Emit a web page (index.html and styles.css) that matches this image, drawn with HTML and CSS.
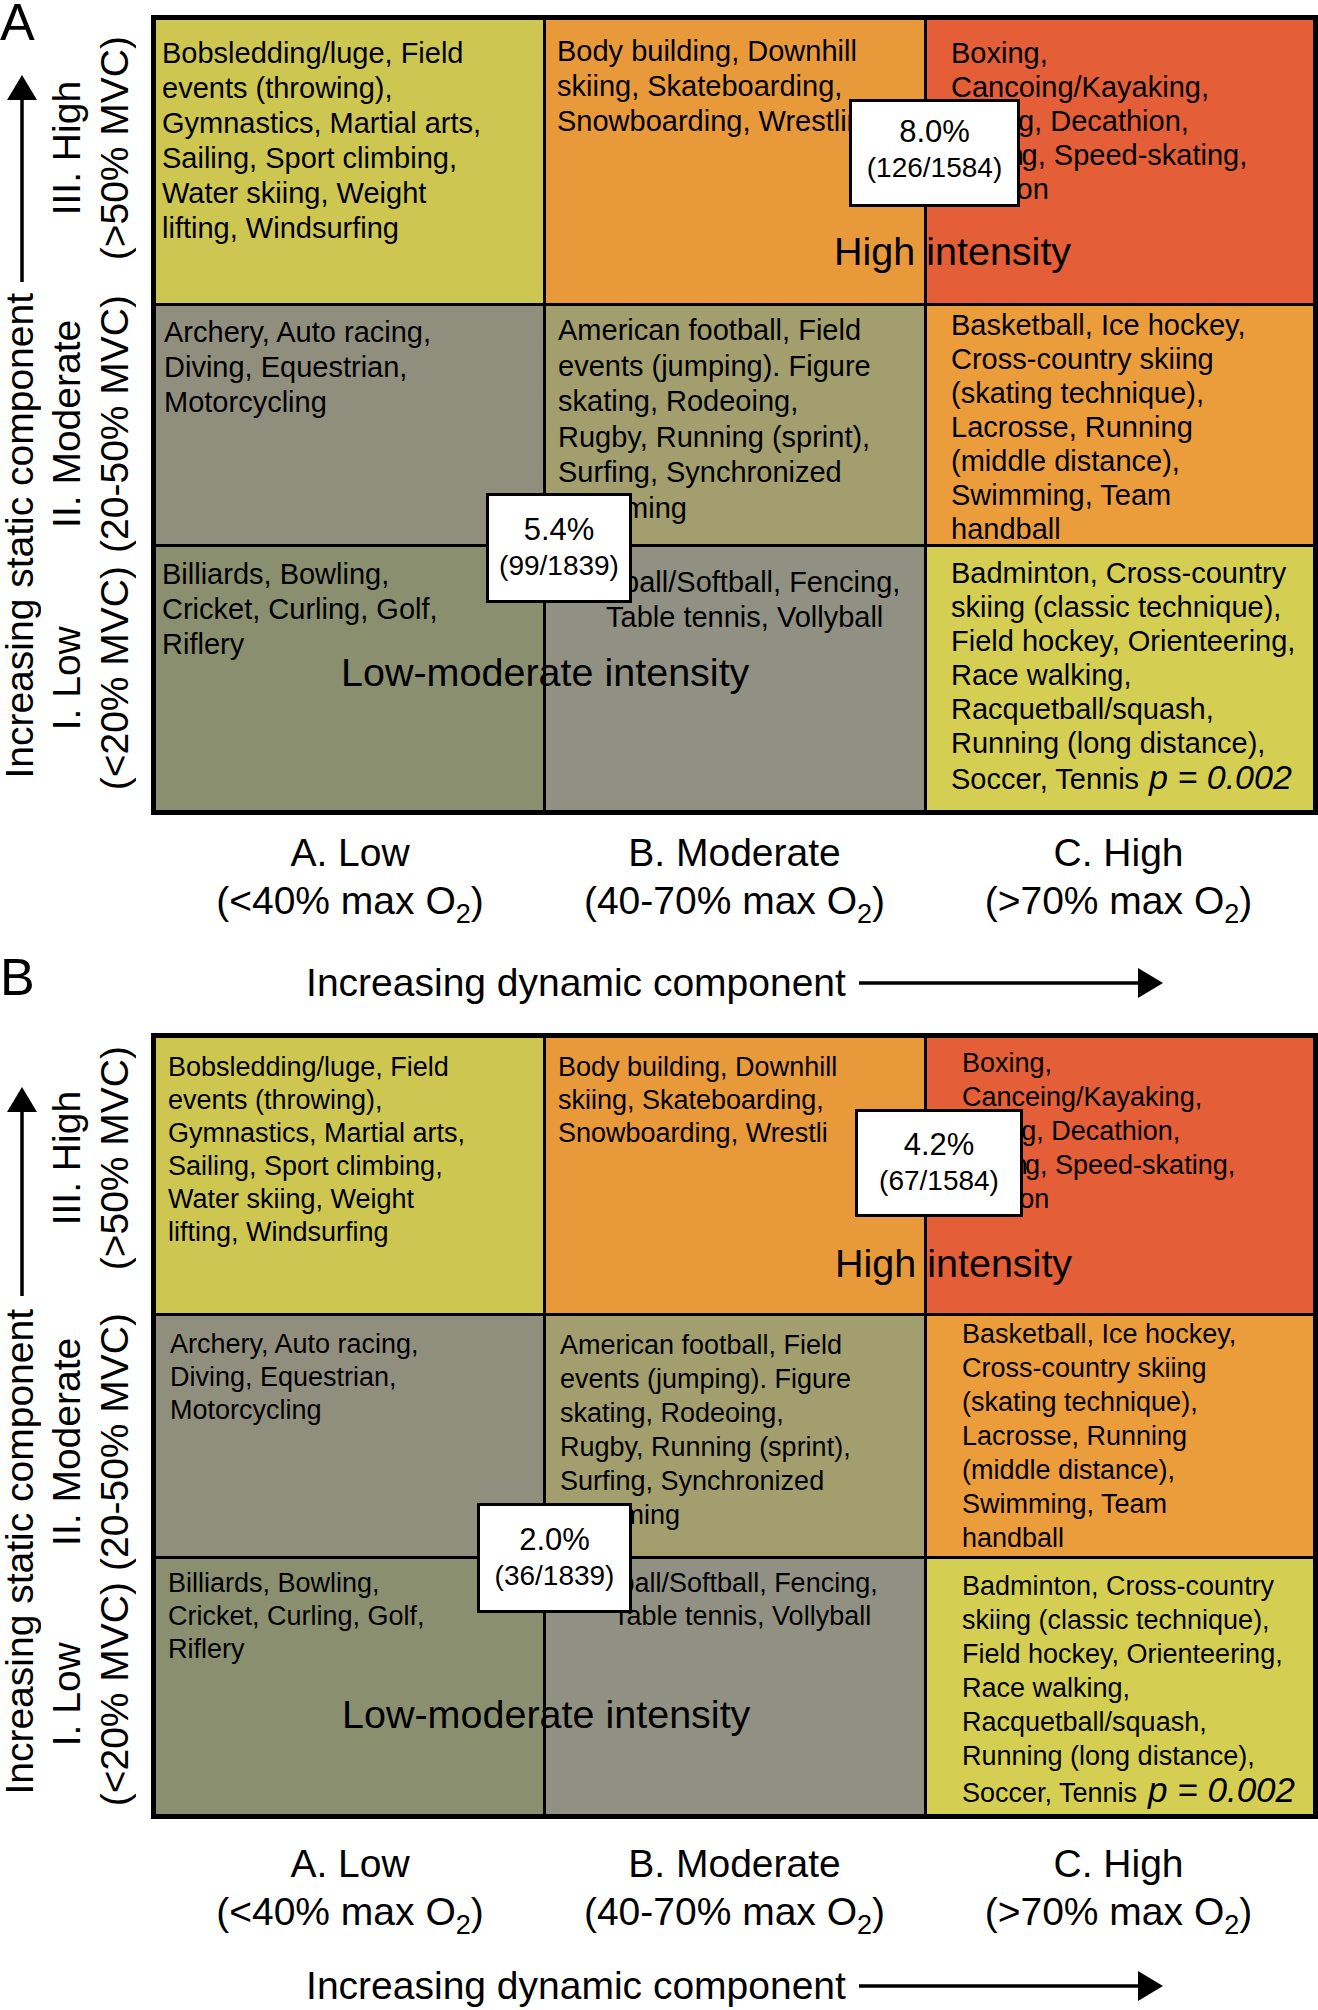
FILE: index.html
```html
<!DOCTYPE html>
<html lang="en">
<head>
<meta charset="utf-8">
<title>Classification of sports by static and dynamic component</title>
<link rel="stylesheet" href="styles.css">
</head>
<body>
<div class="figure">

  <section class="panel panel-a">
    <div class="panel-letter">A</div>
    <div class="chart">
      <div class="yaxis">
        <div class="static-axis">
          <svg class="up-arrow" width="30" height="207" viewBox="0 0 30 207"><polygon points="15,0 30,25 0,25" fill="#000"/><rect x="13.25" y="24" width="3.5" height="183" fill="#000"/></svg>
          <div class="vtext static-title">Increasing static component</div>
        </div>
        <div class="row-labels">
          <div class="row-label rl1"><div class="vtext">III. High<br>(&gt;50% MVC)</div></div>
          <div class="row-label rl2"><div class="vtext">II. Moderate<br>(20-50% MVC)</div></div>
          <div class="row-label rl3"><div class="vtext">I. Low<br>(&lt;20% MVC)</div></div>
        </div>
      </div>
      <div class="grid">
        <div class="cell c-yl p11">Bobsledding/luge, Field<br>events (throwing),<br>Gymnastics, Martial arts,<br>Sailing, Sport climbing,<br>Water skiing, Weight<br>lifting, Windsurfing</div>
        <div class="cell c-or p12">Body building, Downhill<br>skiing, Skateboarding,<br>Snowboarding, Wrestling</div>
        <div class="cell c-rd right p13">Boxing,<br>Cancoing/Kayaking,<br><span class="tuck">Cyclin</span>g, Decathion,<br><span class="tuck">Rowin</span>g, Speed-skating,<br><span class="tuck">Triathl</span>on</div>
        <div class="cell c-gy p21">Archery, Auto racing,<br>Diving, Equestrian,<br>Motorcycling</div>
        <div class="cell c-ol p22">American football, Field<br>events (jumping). Figure<br>skating, Rodeoing,<br>Rugby, Running (sprint),<br>Surfing, Synchronized<br>swimming</div>
        <div class="cell c-or2 right p23">Basketball, Ice hockey,<br>Cross-country skiing<br>(skating technique),<br>Lacrosse, Running<br>(middle distance),<br>Swimming, Team<br>handball</div>
        <div class="cell c-gg p31">Billiards, Bowling,<br>Cricket, Curling, Golf,<br>Riflery</div>
        <div class="cell c-gy2 p32">Baseball/Softball, Fencing,<br><span class="indent">Table tennis, Vollyball</span></div>
        <div class="cell c-yl2 right p33">Badminton, Cross-country<br>skiing (classic technique),<br>Field hockey, Orienteering,<br>Race walking,<br>Racquetball/squash,<br>Running (long distance),<br>Soccer, Tennis<i class="pval">p = 0.002</i></div>

        <div class="tag tag-high">High intensity</div>
        <div class="tag tag-low">Low-moderate intensity</div>
        <div class="stat stat-high"><span class="pct">8.0%</span><span class="frac">(126/1584)</span></div>
        <div class="stat stat-low"><span class="pct">5.4%</span><span class="frac">(99/1839)</span></div>
      </div>
    </div>
    <div class="xlabels">
      <div>A. Low<br>(&lt;40% max O<sub>2</sub>)</div>
      <div>B. Moderate<br>(40-70% max O<sub>2</sub>)</div>
      <div>C. High<br>(&gt;70% max O<sub>2</sub>)</div>
    </div>
    <div class="xtitle">
      <span>Increasing dynamic component</span>
      <svg class="right-arrow" width="304" height="30" viewBox="0 0 304 30"><rect x="0" y="13.25" width="282" height="3.5" fill="#000"/><polygon points="279,0 304,15 279,30" fill="#000"/></svg>
    </div>
  </section>

  <section class="panel panel-b">
    <div class="panel-letter">B</div>
    <div class="chart">
      <div class="yaxis">
        <div class="static-axis">
          <svg class="up-arrow" width="30" height="209" viewBox="0 0 30 209"><polygon points="15,0 30,25 0,25" fill="#000"/><rect x="13.25" y="24" width="3.5" height="185" fill="#000"/></svg>
          <div class="vtext static-title">Increasing static component</div>
        </div>
        <div class="row-labels">
          <div class="row-label rl1"><div class="vtext">III. High<br>(&gt;50% MVC)</div></div>
          <div class="row-label rl2"><div class="vtext">II. Moderate<br>(20-50% MVC)</div></div>
          <div class="row-label rl3"><div class="vtext">I. Low<br>(&lt;20% MVC)</div></div>
        </div>
      </div>
      <div class="grid">
        <div class="cell c-yl p11">Bobsledding/luge, Field<br>events (throwing),<br>Gymnastics, Martial arts,<br>Sailing, Sport climbing,<br>Water skiing, Weight<br>lifting, Windsurfing</div>
        <div class="cell c-or p12">Body building, Downhill<br>skiing, Skateboarding,<br>Snowboarding, Wrestli</div>
        <div class="cell c-rd right p13">Boxing,<br>Canceing/Kayaking,<br><span class="tuck">Cyclin</span>g, Decathion,<br><span class="tuck">Rowin</span>g, Speed-skating,<br><span class="tuck">Triathl</span>on</div>
        <div class="cell c-gy p21">Archery, Auto racing,<br>Diving, Equestrian,<br>Motorcycling</div>
        <div class="cell c-ol p22">American football, Field<br>events (jumping). Figure<br>skating, Rodeoing,<br>Rugby, Running (sprint),<br>Surfing, Synchronized<br>swimming</div>
        <div class="cell c-or2 right p23">Basketball, Ice hockey,<br>Cross-country skiing<br>(skating technique),<br>Lacrosse, Running<br>(middle distance),<br>Swimming, Team<br>handball</div>
        <div class="cell c-gg p31">Billiards, Bowling,<br>Cricket, Curling, Golf,<br>Riflery</div>
        <div class="cell c-gy2 p32">Baseball/Softball, Fencing,<br><span class="indent">Table tennis, Vollyball</span></div>
        <div class="cell c-yl2 right p33">Badminton, Cross-country<br>skiing (classic technique),<br>Field hockey, Orienteering,<br>Race walking,<br>Racquetball/squash,<br>Running (long distance),<br>Soccer, Tennis<i class="pval">p = 0.002</i></div>

        <div class="tag tag-high">High intensity</div>
        <div class="tag tag-low">Low-moderate intensity</div>
        <div class="stat stat-high"><span class="pct">4.2%</span><span class="frac">(67/1584)</span></div>
        <div class="stat stat-low"><span class="pct">2.0%</span><span class="frac">(36/1839)</span></div>
      </div>
    </div>
    <div class="xlabels">
      <div>A. Low<br>(&lt;40% max O<sub>2</sub>)</div>
      <div>B. Moderate<br>(40-70% max O<sub>2</sub>)</div>
      <div>C. High<br>(&gt;70% max O<sub>2</sub>)</div>
    </div>
    <div class="xtitle">
      <span>Increasing dynamic component</span>
      <svg class="right-arrow" width="304" height="30" viewBox="0 0 304 30"><rect x="0" y="13.25" width="282" height="3.5" fill="#000"/><polygon points="279,0 304,15 279,30" fill="#000"/></svg>
    </div>
  </section>

</div>
</body>
</html>
```

FILE: styles.css
```css
html, body {
  margin: 0;
  padding: 0;
  background: #ffffff;
}

body {
  color: #000000;
  font-family: "Liberation Sans", Arial, Helvetica, sans-serif;
  overflow: hidden;
}

.figure {
  width: 1318px;
}

.panel {
  position: relative;
}

.panel-a {
  padding-top: 15px;
}

.panel-b {
  margin-top: 26.5px;
}

/* panel letters A / B */
.panel-letter {
  position: absolute;
  left: 0;
  font-size: 52px;
  line-height: 52px;
}

.panel-a .panel-letter {
  top: -4px;
}

.panel-b .panel-letter {
  top: -82px;
}

/* chart = y axis + grid */
.chart {
  display: flex;
}

.yaxis {
  width: 151px;
  flex-shrink: 0;
  display: flex;
}

.static-axis {
  width: 43px;
  display: flex;
  flex-direction: column;
  justify-content: flex-end;
  align-items: center;
}

.panel-a .static-axis {
  gap: 11px;
  padding-bottom: 36px;
}

.panel-b .static-axis {
  gap: 13px;
  padding-bottom: 24px;
}

.up-arrow {
  display: block;
  flex-shrink: 0;
  margin-left: 1px;
}

.vtext {
  writing-mode: vertical-rl;
  transform: rotate(180deg);
  white-space: nowrap;
  font-size: 39px;
}

.static-title {
  line-height: 39px;
  margin-right: 4px;
}

.row-labels {
  width: 96px;
  display: flex;
  flex-direction: column;
}

.row-label {
  display: flex;
  align-items: center;
  justify-content: center;
  flex-shrink: 0;
}

.row-label .vtext {
  line-height: 48px;
  text-align: center;
}

.panel-a .rl1 { height: 266px; }
.panel-a .rl2 { height: 286px; }
.panel-a .rl3 { height: 222px; }

.panel-b .rl1 { height: 250px; }
.panel-b .rl2 { height: 318px; }
.panel-b .rl3 { height: 186px; }

/* the 3 x 3 grid */
.grid {
  position: relative;
  display: grid;
  grid-template-columns: 387px 378px 386px;
  gap: 3px;
  border: 5px solid #000000;
  background: #000000;
}

.panel-a .grid {
  grid-template-rows: 283px 238px 263px;
}

.panel-b .grid {
  grid-template-rows: 275px 240px 255px;
}

.cell {
  white-space: nowrap;
  overflow: visible;
}

.panel-a .cell {
  font-size: 29px;
  line-height: 35px;
}

.panel-a .cell.right {
  line-height: 34px;
}

.panel-b .cell {
  font-size: 27px;
  line-height: 33px;
}

.panel-b .cell.right {
  line-height: 34px;
}

.c-yl  { background: #cdc651; }
.c-or  { background: #e8993a; }
.c-rd  { background: #e45e37; }
.c-gy  { background: #908f7e; }
.c-ol  { background: #a29e6d; }
.c-or2 { background: #eb9d3b; }
.c-gg  { background: #8a8f6f; }
.c-gy2 { background: #909182; }
.c-yl2 { background: #d4cf52; }

/* panel A cell paddings */
.panel-a .p11 { padding: 16px 0 0 6px; }
.panel-a .p12 { padding: 14px 0 0 11px; }
.panel-a .p13 { padding: 16px 0 0 24px; }
.panel-a .p21 { padding: 9px 0 0 8px; }
.panel-a .p22 { padding: 7px 0 0 12px; line-height: 35.5px; }
.panel-a .p23 { padding: 2px 0 0 24px; }
.panel-a .p31 { padding: 10px 0 0 6px; }
.panel-a .p32 { padding: 18px 0 0 11px; }
.panel-a .p33 { padding: 9px 0 0 24px; }

/* panel B cell paddings */
.panel-b .p11 { padding: 13px 0 0 12px; }
.panel-b .p12 { padding: 13px 0 0 12px; }
.panel-b .p13 { padding: 8px 0 0 35px; }
.panel-b .p21 { padding: 12px 0 0 14px; }
.panel-b .p22 { padding: 12px 0 0 14px; line-height: 34px; }
.panel-b .p23 { padding: 1px 0 0 35px; }
.panel-b .p31 { padding: 8px 0 0 12px; }
.panel-b .p32 { padding: 8px 0 0 12px; }
.panel-b .p33 { padding: 10px 0 0 35px; }

/* word parts that sit under the percentage box */
.panel-a .tuck { letter-spacing: -2px; }
.panel-b .tuck { letter-spacing: -2.4px; }

.indent {
  display: inline-block;
}

.panel-a .indent { margin-left: 49px; }
.panel-b .indent { margin-left: 55px; }

.pval {
  font-style: italic;
}

.panel-a .pval { font-size: 34px; margin-left: 10px; }
.panel-b .pval { font-size: 35px; margin-left: 11px; }

/* overlaid intensity labels */
.tag {
  position: absolute;
  font-size: 39.5px;
  line-height: 39px;
  white-space: nowrap;
}

.panel-a .tag-high { left: 678px; top: 212px; }
.panel-a .tag-low  { left: 185px; top: 633px; }
.panel-b .tag-high { left: 679px; top: 206px; }
.panel-b .tag-low  { left: 186px; top: 657px; }

/* overlaid percentage boxes */
.stat {
  position: absolute;
  box-sizing: border-box;
  background: #ffffff;
  border: 3px solid #000000;
  padding-top: 12px;
  text-align: center;
  white-space: nowrap;
}

.stat .pct {
  display: block;
  font-size: 31px;
  line-height: 35px;
}

.stat .frac {
  display: block;
  font-size: 28px;
  line-height: 38px;
}

.panel-a .stat-high { left: 693px; top: 79px;  width: 171px; height: 108px; }
.panel-a .stat-low  { left: 330px; top: 473px; width: 146px; height: 110px; padding-top: 16px; }
.panel-b .stat-high { left: 699px; top: 71px;  width: 168px; height: 108px; padding-top: 15px; }
.panel-b .stat-low  { left: 321px; top: 465px; width: 155px; height: 110px; padding-top: 16px; }

/* x axis */
.xlabels {
  display: grid;
  grid-template-columns: 388px 381px 387px;
  margin-left: 156px;
  font-size: 39px;
  line-height: 48px;
  text-align: center;
  white-space: nowrap;
}

.xlabels sub {
  font-size: 27px;
  line-height: 0;
  vertical-align: -9px;
}

.panel-a .xlabels { margin-top: 13.5px; }
.panel-b .xlabels { margin-top: 20.5px; }

.xtitle {
  margin-left: 156px;
  width: 1157px;
  display: flex;
  justify-content: center;
  align-items: center;
  font-size: 39px;
  line-height: 48px;
  white-space: nowrap;
}

.panel-a .xtitle { margin-top: 34px; }
.panel-b .xtitle { margin-top: 26px; }

.right-arrow {
  display: block;
  flex-shrink: 0;
  margin-left: 13px;
}
```
